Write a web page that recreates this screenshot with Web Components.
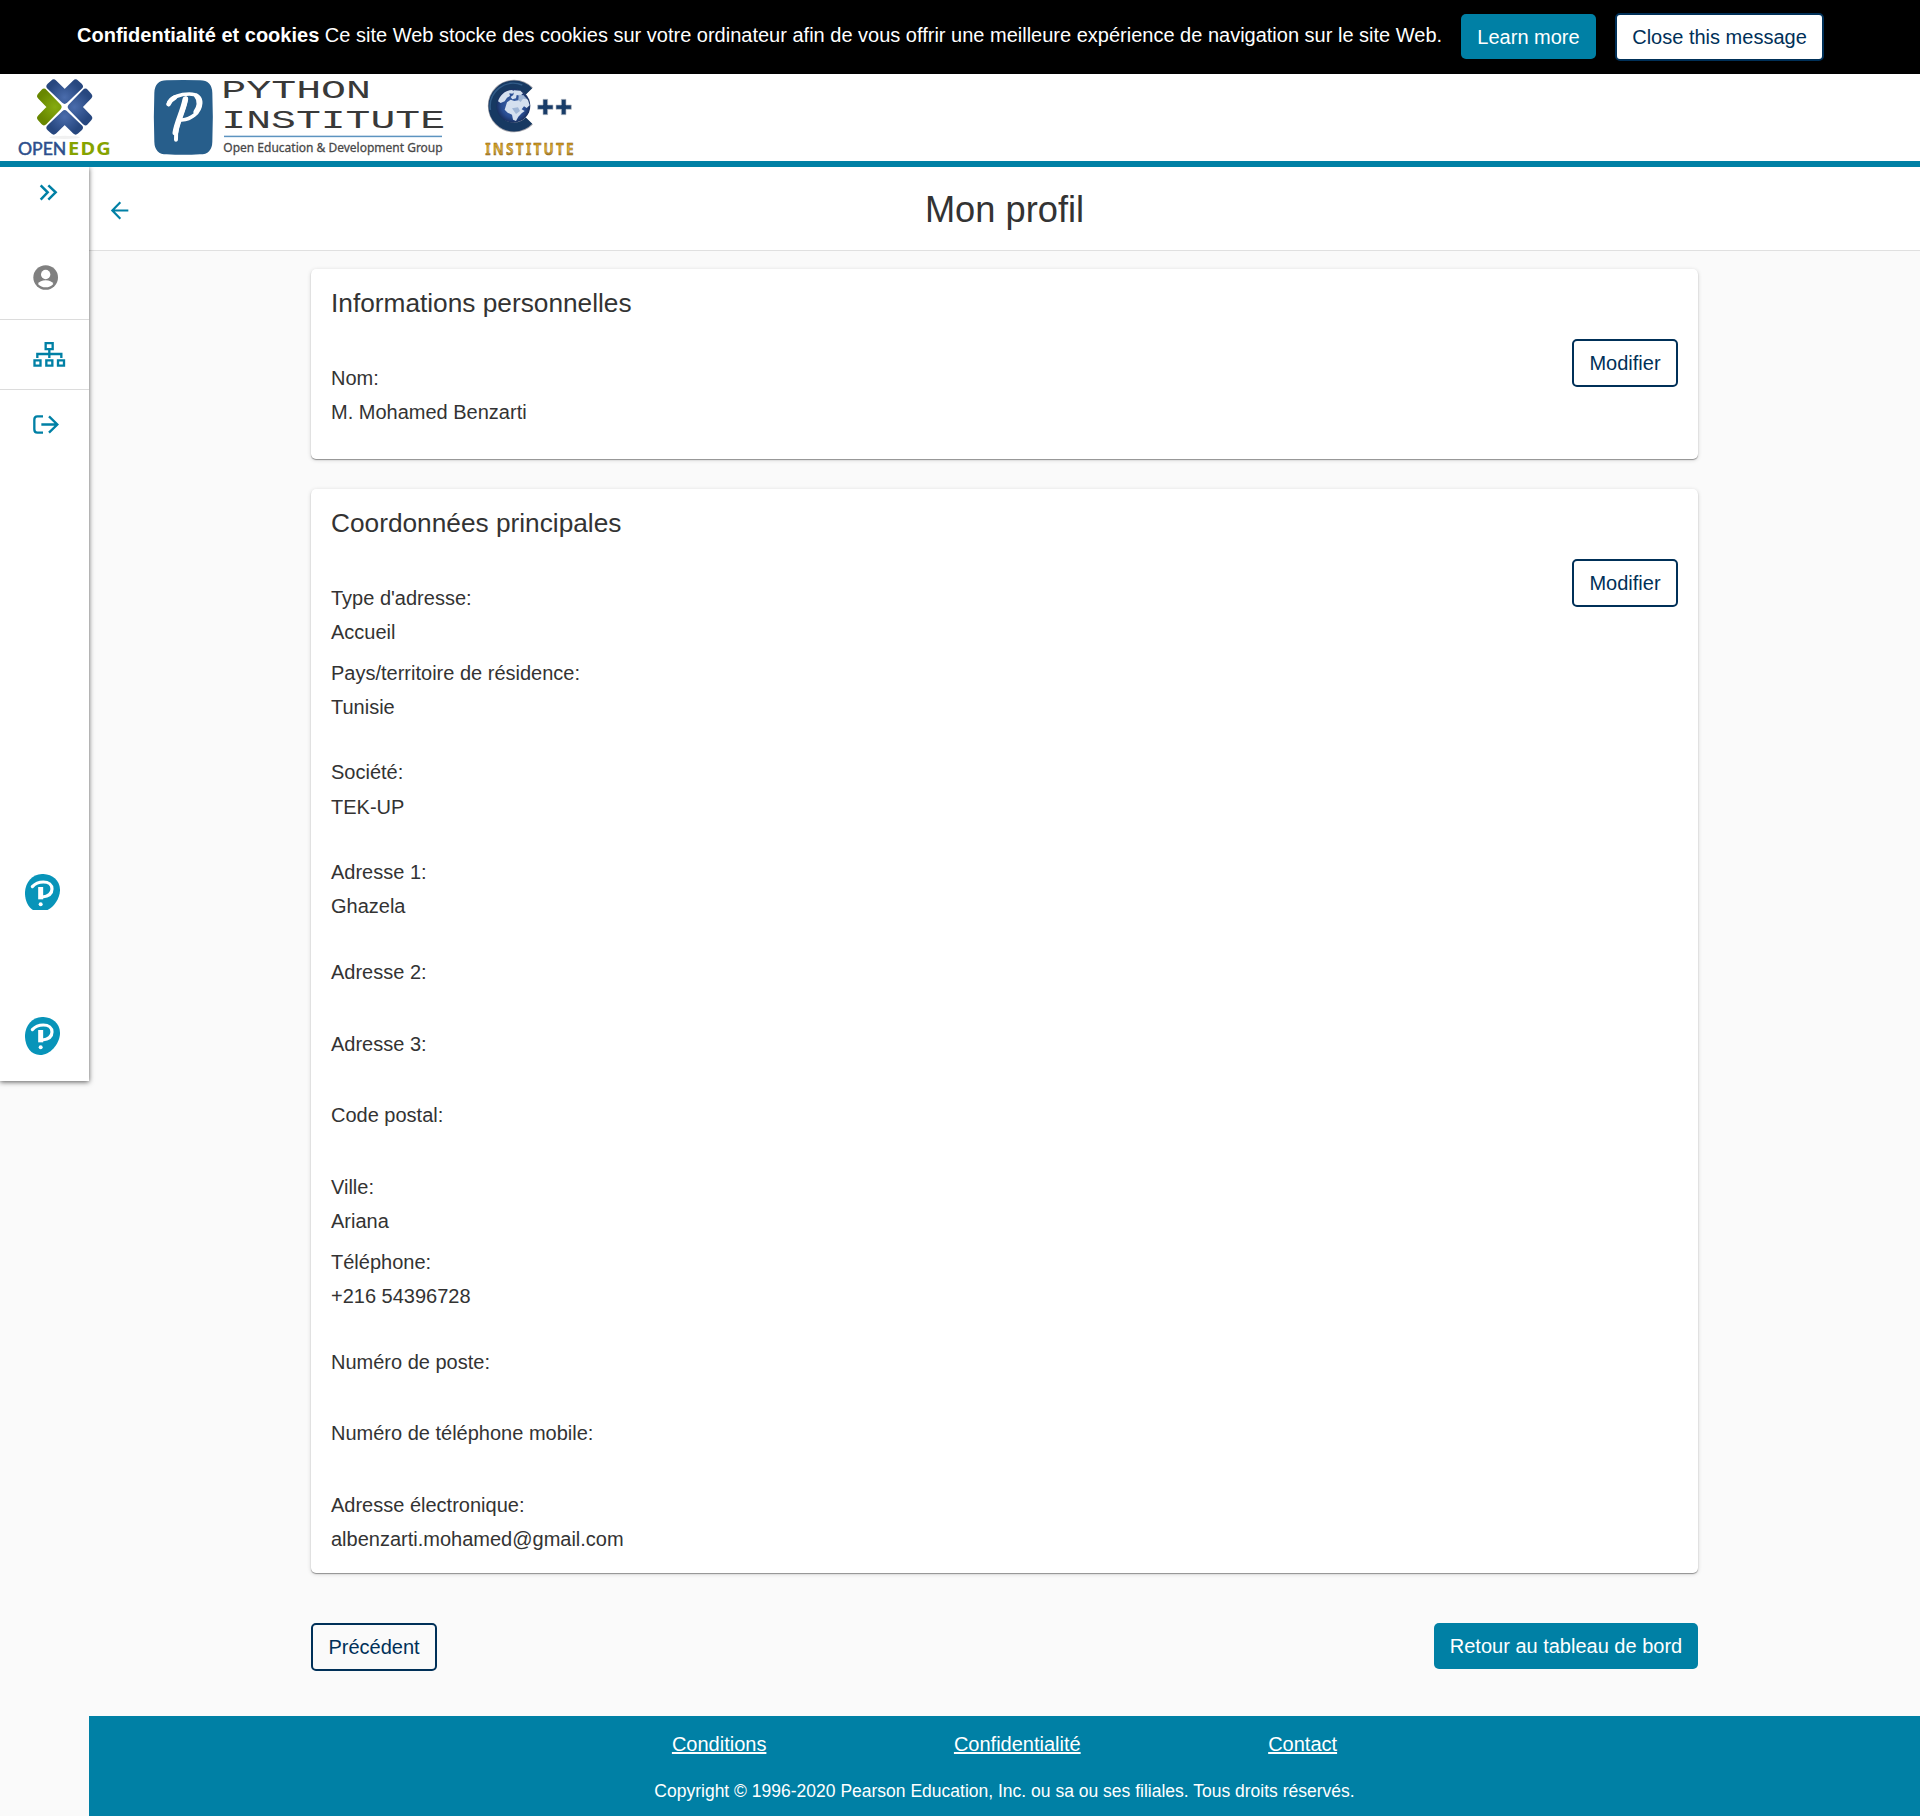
<!DOCTYPE html>
<html lang="fr">
<head>
<meta charset="utf-8">
<title>Mon profil</title>
<style>
body{margin:0;background:#fafafa;font-family:"Liberation Sans",Arial,sans-serif;font-size:20px;color:#333}
</style>
</head>
<body>
<profile-app></profile-app>
<script>
const define = (name, html) => {
  const tpl = document.createElement('template');
  tpl.innerHTML = html;
  customElements.define(name, class extends HTMLElement {
    constructor() {
      super();
      this.attachShadow({ mode: 'open' }).appendChild(tpl.content.cloneNode(true));
    }
  });
};

define('ui-button', `
<style>
:host{display:inline-flex;box-sizing:border-box;height:46px;align-items:center;justify-content:center;border-radius:5px;background:#0080a5;color:#fff;white-space:nowrap;font-size:20px;line-height:24px}
:host([outline]){height:48px;border:2px solid #003058;background:transparent;color:#003058}
</style><slot></slot>`);

define('cookie-banner', `
<style>
:host{display:flex;height:74px;background:#000;color:#fff;box-sizing:border-box;padding:13px 0 0 77px;align-items:flex-start}
p{margin:10px 0 0;width:1384px;line-height:24px;white-space:nowrap}
.more{width:135px;height:45px;margin-top:1px}
.close{width:209px;margin-left:19px;background:#fff}
</style>
<p><b>Confidentialité et cookies</b> Ce site Web stocke des cookies sur votre ordinateur afin de vous offrir une meilleure expérience de navigation sur le site Web.</p>
<ui-button class="more">Learn more</ui-button><ui-button outline class="close">Close this message</ui-button>`);

define('openedg-logo', `
<style>:host{display:block;width:93px;height:77px}svg{display:block;overflow:visible}</style>
<svg width="93" height="77" viewBox="54 57 279 231">
<defs>
<radialGradient id="b" gradientUnits="userSpaceOnUse" cx="194" cy="112" r="52"><stop offset="0" stop-color="#4a6cac"/><stop offset="1" stop-color="#27477f"/></radialGradient>
<radialGradient id="g" gradientUnits="userSpaceOnUse" cx="194" cy="112" r="52"><stop offset="0" stop-color="#86ab10"/><stop offset="1" stop-color="#688700"/></radialGradient>
</defs>
<ellipse cx="194" cy="232" rx="46" ry="5" fill="#f1f1f1"/>
<g fill="url(#b)" stroke-width="21" stroke-linejoin="round" stroke="url(#b)">
<path d="M150 79L194 121L238 79L227 69L194 101L161 69Z"/>
<path d="M150 79L194 121L238 79L227 69L194 101L161 69Z" transform="rotate(90 194 141)"/>
<path d="M150 79L194 121L238 79L227 69L194 101L161 69Z" transform="rotate(180 194 141)"/>
<path d="M150 79L194 121L238 79L227 69L194 101L161 69Z" transform="rotate(270 194 141)" fill="url(#g)" stroke="url(#g)"/>
</g>
<text x="54" y="284" font-family="Lato" font-size="52" fill="#2c4f8c" stroke="#2c4f8c" stroke-width="1.500" textLength="145" lengthAdjust="spacingAndGlyphs">OPEN</text>
<text x="0" y="284" font-family="Noto Sans" font-weight="700" font-size="51" fill="#86a300" textLength="109" lengthAdjust="spacing" transform="translate(204 0) scale(1.18 1)">EDG</text>
</svg>`);

define('python-logo', `
<style>:host{display:block;width:291px;height:77px}svg{display:block;overflow:visible}</style>
<svg width="291" height="77" viewBox="459 57 873 231">
<path d="M500 61Q550 59 600 61Q636 61 637 99Q640 172 637 245Q636 283 600 283Q550 286 500 283Q464 283 463 245Q460 172 463 99Q464 61 500 61Z" fill="#275e8b"/>
<g fill="none" stroke="#fff" stroke-linecap="round" stroke-linejoin="round">
<path d="M558 115C552 160 525 185 528 239" stroke-width="12"/>
<path d="M556 118C549 155 531 185 526 218" stroke-width="17"/>
<path d="M505 133C511 110 545 102 568 102C593 102 602 112 602 129C600 158 574 178 545 180" stroke-width="11"/>
<path d="M506 132C510 122 517 116 525 112M589 108C602 122 597 143 587 156" stroke-width="14"/>
</g>
<g font-family="Liberation Mono" fill="#393939">
<text x="664" y="113" font-size="78" textLength="449" lengthAdjust="spacingAndGlyphs">PYTHON</text>
<text x="664" y="204" font-size="79" textLength="671" lengthAdjust="spacingAndGlyphs">INSTITUTE</text>
</g>
<rect x="672" y="227" width="654" height="4.5" fill="#5d94c0"/>
<text x="670" y="276" font-family="Noto Sans" font-size="36" fill="#484848" stroke="#484848" stroke-width=".8" textLength="658" lengthAdjust="spacingAndGlyphs">Open Education &amp; Development Group</text>
</svg>`);

define('cpp-logo', `
<style>:host{display:block;width:90px;height:77px}svg{display:block;overflow:visible}</style>
<svg width="90" height="77" viewBox="555 57 270 231">
<defs>
<linearGradient id="gold" x1="0" y1="0" x2="0" y2="1"><stop offset=".2" stop-color="#c08a10"/><stop offset=".55" stop-color="#e8b838"/><stop offset="1" stop-color="#80591c"/></linearGradient>
<radialGradient id="sea"><stop offset="0" stop-color="#476cad"/><stop offset=".7" stop-color="#284c91"/><stop offset="1" stop-color="#19305f"/></radialGradient>
</defs>
<path d="M688 93A64 64 0 1 0 688 183" fill="none" stroke="#a3a3aa" stroke-width="30"/>
<path d="M687 94A63 63 0 1 0 687 182" fill="none" stroke="#173962" stroke-width="27"/>
<path d="M667 75A70 70 0 0 0 571 150" fill="none" stroke="#315b87" stroke-width="5"/>
<circle cx="640" cy="137" r="51" fill="url(#sea)"/>
<path d="M594 124C600 104 617 91 635 90L645 94L637 101L628 100L630 108L621 113L614 124L602 129ZM642 91L661 92L669 100L661 107L650 105L648 115L637 118L632 111L640 105ZM621 127L632 119L643 123L655 121L662 113L675 112L684 120L689 136L680 144L672 139L665 148L674 153L665 160L655 170L648 183L639 179L636 164L623 158L614 149Z" fill="#d4e0ef"/>
<path d="M656 104L671 106L680 118L669 116L662 126L655 121ZM636 145L654 142L660 153L648 162Z" fill="#9fb6d6"/>
<g fill="#183c68" stroke="#b8bdc5" stroke-width="2"><path d="M729 118h14v17h16v13h-16v16h-14v-16h-16v-13h16zM784 118h14v17h16v13h-16v16h-14v-16h-16v-13h16z"/></g>
<text x="0" y="284" font-family="Noto Sans" font-weight="700" font-size="50" fill="url(#gold)" stroke="#8a6424" stroke-width="1.500" textLength="325" lengthAdjust="spacing" transform="translate(556 0) scale(.815 1)">INSTITUTE</text>
</svg>`);

define('site-header', `
<style>
:host{display:flex;height:93px;box-sizing:border-box;background:#fff;border-bottom:6px solid #0080a5;padding:5px 0 0 18px}
python-logo{margin-left:42px}cpp-logo{margin-left:41px}
</style><openedg-logo></openedg-logo><python-logo></python-logo><cpp-logo></cpp-logo>`);

define('pearson-mark', `
<style>:host{display:block;width:35px;height:38px;overflow:hidden}svg{display:block}</style>
<svg width="35" height="38" viewBox="0 0 105 114">
<path d="M51 0C82-1 106 20 105 50C103 82 75 114 45 114C17 114-1 87 0 55C1 25 22 1 51 0Z" fill="#0894b9"/>
<g fill="none" stroke="#fff" stroke-linecap="round">
<path d="M22 38C31 28 43 24 55 24C71 24 81 33 81 45C81 58 70 67 52 69" stroke-width="9.500"/>
<path d="M47 39V76" stroke-width="15" stroke-linecap="butt"/>
</g><circle cx="47" cy="91" r="6" fill="#fff"/>
</svg>`);

define('side-nav', `
<style>
:host{display:flex;flex-direction:column;width:89px;height:914px;background:#fff;box-shadow:0 1px 5px rgba(0,0,0,.65);flex:none;z-index:1;clip-path:inset(0 -10px -10px 0)}
div{box-sizing:border-box}
svg{display:block}
.toggle{height:70px;padding:17px 0 0 39px}
.user{height:83px;padding:28px 0 0 33px;border-bottom:1px solid #dcdcdc}
.org{height:70px;padding:21px 0 0 33px;border-bottom:1px solid #dcdcdc}
.out{height:484px;padding:24px 0 0 33px}
.a{margin-left:25px;height:36px}
.b{margin:107px 0 0 25px}
</style>
<div class="toggle"><svg width="19" height="17" viewBox="117 72 57 51" fill="none" stroke="#0080a5" stroke-width="7.500"><path d="M122 76L143 97L122 119M145 76L167 97L145 119"/></svg></div>
<div class="user"><svg width="25" height="25" viewBox="99 315 75 75"><circle cx="137" cy="352.500" r="37" fill="#808080"/><circle cx="137" cy="343.500" r="14" fill="#fff"/><path d="M114 372C118 365 126 361 137 361C148 361 156 365 160 372C154 379 146 382 137 382C128 382 120 379 114 372Z" fill="#fff"/></svg></div>
<div class="org"><svg width="33" height="27" viewBox="99 543 99 81" fill="none" stroke="#0080a5" stroke-width="7"><path d="M137 549.500h21v18h-21zM103.500 601h18v16h-18zM139 601h18v16h-18zM174 601h18v16h-18zM148 569V594M112 594V582H184V594"/></svg></div>
<div class="out"><svg width="27" height="21" viewBox="99 762 81 63" fill="none" stroke="#0080a5" stroke-width="7"><path d="M129 769H112Q103 769 103 779V808Q103 818 112 818H129M124 793.500H173M147 769L172 793.500L147 818"/></svg></div>
<pearson-mark class="a"></pearson-mark><pearson-mark class="b"></pearson-mark>`);

define('page-title', `
<style>
:host{display:flex;height:84px;box-sizing:border-box;background:#fff;border-bottom:1px solid #e0e0e0;align-items:center;padding-left:21px}
svg{display:block;width:20px;margin-top:4px}
h1{margin:2px 41px 0 0;flex:1;text-align:center;font-weight:400;font-size:36.250px;line-height:42px}
</style>
<svg width="20" height="19" viewBox="330 123 60 57" fill="none" stroke="#0080a5" stroke-width="6.500"><path d="M385 151.500H337M361 127L337 151.500L361 176"/></svg><h1><slot></slot></h1>`);

define('info-card', `
<style>
:host{display:block;box-sizing:border-box;background:#fff;border-radius:5px;padding:19px 20px 0;box-shadow:0 1px 1px rgba(0,0,0,.36),0 1px 4px rgba(0,0,0,.16)}
h2{margin:0;font-weight:400;font-size:26.250px;line-height:30px}
.row{display:flex;justify-content:space-between;align-items:flex-start;margin-top:21px}
.fields{display:flex;flex-direction:column;padding-top:22px}
ui-button{width:106px}
</style>
<h2><slot name="heading"></slot></h2><div class="row"><div class="fields"><slot></slot></div><ui-button outline>Modifier</ui-button></div>`);

define('info-field', `
<style>:host{display:block;line-height:34px;height:100px}::slotted(div){height:34px;white-space:nowrap}</style><slot></slot>`);

define('site-footer', `
<style>
:host{display:block;height:100px;box-sizing:border-box;background:#0080a5;color:#fff;padding:16px 0 0}
nav{display:flex;justify-content:center;gap:187.500px;line-height:24px}
a{color:inherit;text-decoration:underline}
p{margin:24px 0 0;text-align:center;font-size:17.500px;line-height:22px}
</style>
<nav><a>Conditions</a><a>Confidentialité</a><a>Contact</a></nav>
<p>Copyright © 1996-2020 Pearson Education, Inc. ou sa ou ses filiales. Tous droits réservés.</p>`);

const rows = [["Type d'adresse:",'Accueil',75],['Pays/territoire de résidence:','Tunisie',99],['Société:','TEK-UP',100,35],['Adresse 1:','Ghazela',100],['Adresse 2:','',72],['Adresse 3:','',71],['Code postal:','',72],['Ville:','Ariana',75],['Téléphone:','+216 54396728',100],['Numéro de poste:','',71],['Numéro de téléphone mobile:','',72],['Adresse électronique:','albenzarti.mohamed@gmail.com',68]];
const fields = rows.map(([l, v, h, lh = 34]) => `<info-field style="height:${h}px"><div style="height:${lh}px">${l}</div>${v ? `<div>${v}</div>` : ''}</info-field>`).join('');

define('profile-app', `
<style>
:host{display:block}
.body{display:flex;align-items:flex-start}
main{flex:1;min-width:0}
.content{width:1387px;margin:18px auto 0;display:flex;flex-direction:column}
.one{height:190px;margin-bottom:30px}
.two{height:1084px}
.actions{display:flex;justify-content:space-between;align-items:flex-start;margin-top:50px;height:93px}
.prev{width:126px}.home{width:264px}
</style>
<cookie-banner></cookie-banner><site-header></site-header>
<div class="body"><side-nav></side-nav><main>
<page-title>Mon profil</page-title>
<div class="content">
<info-card class="one"><span slot="heading">Informations personnelles</span><info-field style="height:68px"><div>Nom:</div><div>M. Mohamed Benzarti</div></info-field></info-card>
<info-card class="two"><span slot="heading">Coordonnées principales</span>${fields}</info-card>
<div class="actions"><ui-button outline class="prev">Précédent</ui-button><ui-button class="home">Retour au tableau de bord</ui-button></div>
</div>
<site-footer></site-footer>
</main></div>`);
</script>
</body>
</html>
